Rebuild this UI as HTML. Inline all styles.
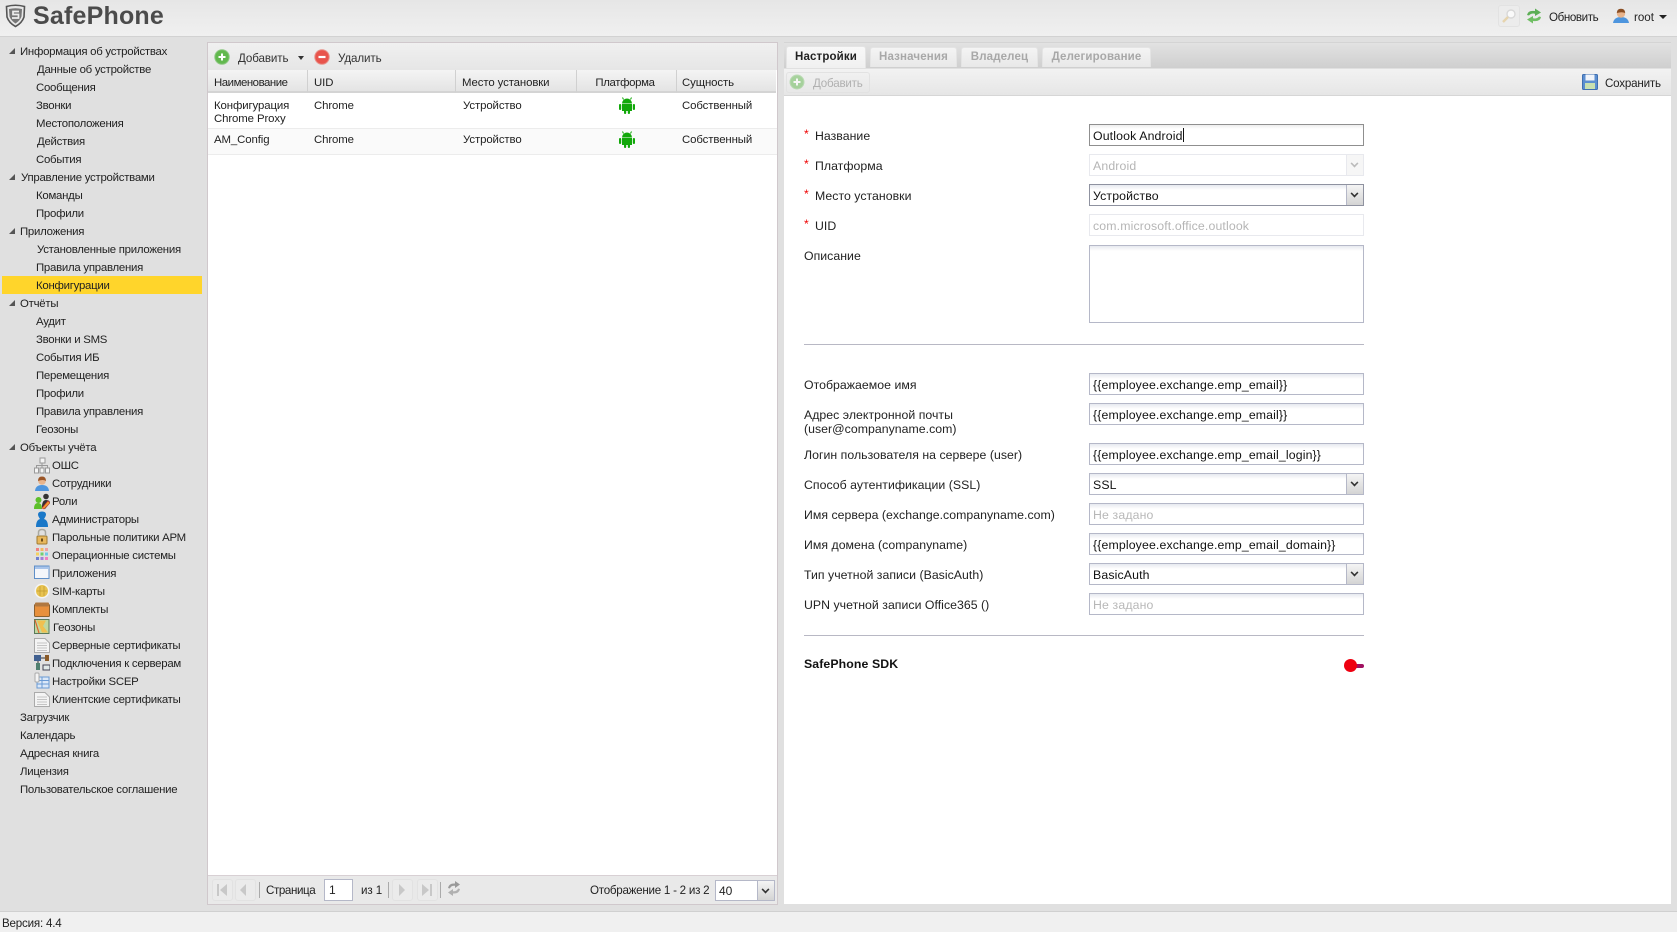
<!DOCTYPE html>
<html lang="ru"><head><meta charset="utf-8"><title>SafePhone</title>
<style>
html,body{margin:0;padding:0;width:1677px;height:932px;overflow:hidden;background:#f0f0f0}
body{position:relative;font-family:"Liberation Sans",sans-serif;font-size:12px;color:#222}
div,span,svg{box-sizing:border-box}
.a{position:absolute}
.t{position:absolute;white-space:nowrap;line-height:18px;height:18px}
#side .r{position:absolute;margin-top:1px;white-space:nowrap;line-height:18px;height:18px;font-size:11.4px;letter-spacing:-.25px;color:#222}
.lb{position:absolute;left:804px;white-space:nowrap;font-size:12.3px;letter-spacing:.03px;line-height:18px;color:#222}
.lb i{color:#e00;font-style:normal;position:absolute;left:0;top:-2px}
.in{position:absolute;left:1089px;width:275px;height:22px;border:1px solid #b5b8c8;background:linear-gradient(#e6e9f0,#fff 5px,#fff);font-size:12.3px;letter-spacing:.14px;line-height:22px;padding-left:3px;white-space:nowrap;color:#111;overflow:hidden}
.in.dis{border-color:#e8e9ee;background:#fff;color:#b5b5b5}
.in.ph{color:#b8b8b8}
.arr{position:absolute;right:0;top:0;width:17px;height:20px;border-left:1px solid #b5b8c8;background:linear-gradient(#f4f4f4,#d4d4d4)}
.arr:after{content:"";position:absolute;left:4px;top:5px;width:5px;height:5px;border-right:2px solid #333;border-bottom:2px solid #333;transform:rotate(45deg) scale(.8)}
.dis .arr{border-color:#e8e9ee;background:#f6f6f6}
.dis .arr:after{border-color:#bbb}
.tab{position:absolute;top:47px;height:20px;background:linear-gradient(#f4f4f4,#e8e8e8);border:1px solid #e4e4e4;border-bottom:0;border-radius:3px 3px 0 0;font-weight:bold;font-size:11.5px;color:#a8a8a8;text-align:center;line-height:19px;letter-spacing:.15px}
.th{position:absolute;top:70px;height:23px;line-height:26px;font-size:11.4px;letter-spacing:-.1px;color:#222;white-space:nowrap;background:linear-gradient(#f4f4f4,#e4e4e4);border-right:1px solid #d0d0d0;border-bottom:2px solid #d4d4d4;padding-left:6px}
.c{position:absolute;white-space:nowrap;font-size:11.4px;letter-spacing:-.1px;line-height:13px;color:#222}
.pb{position:absolute;top:879px;width:21px;height:22px;border:1px solid #e2e2e2;border-radius:3px;background:#ebebeb}
.sep{position:absolute;top:882px;width:1px;height:16px;background:#aaa}
</style></head><body>

<!-- header -->
<div class="a" style="left:0;top:0;width:1677px;height:37px;background:linear-gradient(#e6e6e6,#f0f0f0);border-bottom:1px solid #d2d2d2"></div>
<svg class="a" style="left:5px;top:4px" width="21" height="24" viewBox="0 0 21 24"><path d="M1.500 2.500 Q10.500 0 19.500 2.500 L19 13 Q17 19 10.500 22.500 Q4 19 2 13Z" fill="#e8e8e8" stroke="#555" stroke-width="1.600"/><path d="M4 5 Q10.500 3.500 17 5 L16.500 12.500 Q15 16.500 10.500 19.500 Q6 16.500 4.500 12.500Z" fill="#777"/><path d="M14 7.500H8V10.500H13.500V14H7" fill="none" stroke="#eee" stroke-width="1.700"/></svg>
<div class="t" style="left:33px;top:1px;height:30px;line-height:30px;font-size:25px;font-weight:bold;color:#4b4b4b;letter-spacing:.2px">SafePhone</div>
<div class="a" style="left:1498px;top:5px;width:22px;height:22px;border:1px solid #e2e2e2;border-radius:3px;background:#ececec"></div>
<svg class="a" style="left:1501px;top:8px" width="16" height="16" viewBox="0 0 16 16"><circle cx="10" cy="6" r="4" fill="#fafafa" stroke="#d8d8d8" stroke-width="1.400"/><path d="M7 9L2 14" stroke="#e6d4ae" stroke-width="2.400"/></svg>
<svg class="a" style="left:1525px;top:8px" width="18" height="16" viewBox="0 0 18 16"><path d="M2 7Q3 2 10 3V0.500L16 4.500L10 8V5.700Q6 5 4 7.500Z" fill="#5cae55"/><path d="M16 9Q15 14 8 13V15.500L2 11.500L8 8V10.300Q12 11 14 8.500Z" fill="#6fbe63"/></svg>
<div class="t" style="left:1549px;top:9px;font-size:11.6px;letter-spacing:-.4px;color:#222">Обновить</div>
<svg class="a" style="left:1612px;top:8px" width="18" height="16" viewBox="0 0 18 16"><path d="M1 15Q2 9 9 9Q16 9 17 15Z" fill="#4d95de"/><circle cx="9" cy="5.500" r="4.200" fill="#e8b48c"/><path d="M4.800 5Q5 0.800 9 0.800Q13 0.800 13.200 5Q10 3.500 4.800 5Z" fill="#8a4d22"/></svg>
<div class="t" style="left:1634px;top:9px;font-size:11.6px">root</div>
<div class="a" style="left:1659px;top:15px;border:4px solid transparent;border-top-color:#222;border-bottom:0"></div>

<!-- sidebar -->
<div class="a" style="left:0;top:37px;width:1677px;height:875px;background:#e0e0e0;border-bottom:1px solid #d0d0d0"></div>
<div class="a" style="left:2px;top:276px;width:200px;height:18px;background:#ffd52b"></div>
<div id="side">
<svg class="a" style="left:0;top:1px;overflow:visible" width="16" height="500"><g fill="#555"><path d="M15 47V53H9Z"/><path d="M15 173V179H9Z"/><path d="M15 227V233H9Z"/><path d="M15 299V305H9Z"/><path d="M15 443V449H9Z"/></g></svg>
<div class="r" style="left:20px;top:42px">Информация об устройствах</div>
<div class="r" style="left:37px;top:60px">Данные об устройстве</div>
<div class="r" style="left:36px;top:78px">Сообщения</div>
<div class="r" style="left:36px;top:96px">Звонки</div>
<div class="r" style="left:36px;top:114px">Местоположения</div>
<div class="r" style="left:37px;top:132px">Действия</div>
<div class="r" style="left:36px;top:150px">События</div>
<div class="r" style="left:21px;top:168px">Управление устройствами</div>
<div class="r" style="left:36px;top:186px">Команды</div>
<div class="r" style="left:36px;top:204px">Профили</div>
<div class="r" style="left:20px;top:222px">Приложения</div>
<div class="r" style="left:37px;top:240px">Установленные приложения</div>
<div class="r" style="left:36px;top:258px">Правила управления</div>
<div class="r" style="left:36px;top:276px">Конфигурации</div>
<div class="r" style="left:20px;top:294px">Отчёты</div>
<div class="r" style="left:36px;top:312px">Аудит</div>
<div class="r" style="left:36px;top:330px">Звонки и SMS</div>
<div class="r" style="left:36px;top:348px">События ИБ</div>
<div class="r" style="left:36px;top:366px">Перемещения</div>
<div class="r" style="left:36px;top:384px">Профили</div>
<div class="r" style="left:36px;top:402px">Правила управления</div>
<div class="r" style="left:36px;top:420px">Геозоны</div>
<div class="r" style="left:20px;top:438px">Объекты учёта</div>
<div class="r" style="left:52px;top:456px">ОШС</div>
<div class="r" style="left:52px;top:474px">Сотрудники</div>
<div class="r" style="left:52px;top:492px">Роли</div>
<div class="r" style="left:52px;top:510px">Администраторы</div>
<div class="r" style="left:52px;top:528px">Парольные политики АРМ</div>
<div class="r" style="left:52px;top:546px">Операционные системы</div>
<div class="r" style="left:52px;top:564px">Приложения</div>
<div class="r" style="left:52px;top:582px">SIM-карты</div>
<div class="r" style="left:52px;top:600px">Комплекты</div>
<div class="r" style="left:53px;top:618px">Геозоны</div>
<div class="r" style="left:52px;top:636px">Серверные сертификаты</div>
<div class="r" style="left:52px;top:654px">Подключения к серверам</div>
<div class="r" style="left:52px;top:672px">Настройки SCEP</div>
<div class="r" style="left:52px;top:690px">Клиентские сертификаты</div>
<div class="r" style="left:20px;top:708px">Загрузчик</div>
<div class="r" style="left:20px;top:726px">Календарь</div>
<div class="r" style="left:20px;top:744px">Адресная книга</div>
<div class="r" style="left:20px;top:762px">Лицензия</div>
<div class="r" style="left:20px;top:780px">Пользовательское соглашение</div>
<!-- sidebar icons -->
<svg class="a" style="left:34px;top:457px" width="16" height="256" viewBox="0 0 16 256">
<g fill="#f4f4f4" stroke="#999"><rect x="6" y="1" width="5" height="5"/><rect x="0.500" y="11" width="4" height="5"/><rect x="6" y="11" width="4" height="5"/><rect x="11.500" y="11" width="4" height="5"/><path d="M8 6V11M2.500 11V8.500H13.500V11" fill="none"/></g>
<path d="M1 34Q1.500 28 8 28Q14.500 28 15 34Z" fill="#4d95de"/><circle cx="8" cy="24" r="3.800" fill="#e8b48c"/><path d="M4 24Q4 19.500 8 19.500Q12 19.500 12 24Q9 22 4 24Z" fill="#9a5526"/>
<path d="M0 52Q0 46 4 46Q8 46 8 52Z" fill="#5cbf2a"/><circle cx="4.500" cy="43" r="3" fill="#5cbf2a"/><path d="M8 50Q8 43 12 43Q16 43 16 46L11 52Z" fill="#333"/><circle cx="12" cy="39.500" r="2.800" fill="#333"/><path d="M8 51L14 44L16 46L10 52Z" fill="#f0a030" stroke="#c33" stroke-width=".6"/>
<path d="M2 70Q2 63 6 62Q4 59 4 57.500Q4 54.500 8 54.500Q12 54.500 12 57.500Q12 59 10 62Q14 63 14 70Z" fill="#1a78c8"/>
<rect x="3" y="79" width="10" height="8" rx="1" fill="#e8b85c" stroke="#a07a30"/><path d="M4.500 79V75.500Q4.500 72.500 8 72.500Q11.500 72.500 11.500 75.500V79" fill="none" stroke="#a8a8a0" stroke-width="1.500"/><rect x="7" y="81.500" width="2" height="3" fill="#6b4d1a"/>
<g><rect x="2" y="91" width="3" height="3" fill="#f08080"/><rect x="6.500" y="91" width="3" height="3" fill="#f4b860"/><rect x="11" y="91" width="3" height="3" fill="#f0a0a0"/><rect x="2" y="95.500" width="3" height="3" fill="#f4d060"/><rect x="6.500" y="95.500" width="3" height="3" fill="#70d070"/><rect x="11" y="95.500" width="3" height="3" fill="#70c8e8"/><rect x="2" y="100" width="3" height="3" fill="#7080d0"/><rect x="6.500" y="100" width="3" height="3" fill="#a080d8"/><rect x="11" y="100" width="3" height="3" fill="#f080c0"/></g>
<rect x="0.500" y="109" width="14.500" height="12.500" fill="#f4f6fa" stroke="#5f8fc8"/><rect x="1" y="109.500" width="14" height="2.500" fill="#a8c4ea"/>
<circle cx="8" cy="134" r="7.500" fill="#f4f4f4"/><circle cx="8" cy="134" r="6" fill="#e8c350"/><path d="M6 129V139M10 129V139M3 134H13" stroke="#c09a30" stroke-width=".7"/>
<rect x="0.500" y="147.500" width="15" height="12" rx="1" fill="#e8903c" stroke="#8a6030"/><rect x="1" y="145.500" width="14" height="4" rx="1" fill="#b07840"/>
<rect x="0.500" y="162.500" width="14.500" height="14" fill="#c0d8a0" stroke="#5a7a5a"/><path d="M3 163.500L8 175.500H14L9 169L12 163.500Z" fill="#f0c050"/><path d="M1 163L5 176" stroke="#e06030" stroke-width="1.200"/>
<path d="M0.500 181.500H11L15.500 186V195.500H0.500Z" fill="#f4f4f4" stroke="#aaa"/><path d="M3 186H13M3 188.500H13M3 191H13M3 193.500H13" stroke="#c4c4c4"/>
<rect x="0" y="198" width="7" height="6" fill="#406090"/><rect x="11" y="198" width="4" height="6" fill="#8a5a28"/><rect x="2" y="206" width="4" height="7" fill="#508070"/><rect x="9" y="208" width="7" height="5" fill="#e0e8e8" stroke="#445"/><path d="M7 201H11M4 204V206" stroke="#333"/>
<rect x="3" y="220" width="12" height="11" fill="#dbe8f8" stroke="#6a9ad4"/><path d="M3 223.500H15M3 227H15M8 220V231" stroke="#6a9ad4"/><rect x="1" y="216" width="4" height="9" rx="1" fill="#f4f4f4" stroke="#aaa"/>
<path d="M0.500 235.500H11L15.500 240V249.500H0.500Z" fill="#f4f4f4" stroke="#aaa"/><path d="M3 240H13M3 242.500H13M3 245H13M3 247.500H13" stroke="#c4c4c4"/>
</svg>
</div>

<!-- center panel -->
<div class="a" style="left:207px;top:42px;width:571px;height:863px;background:#fff;border:1px solid #d0c8cc"></div>
<div class="a" style="left:208px;top:43px;width:569px;height:27px;background:linear-gradient(#f0f0f0,#e6e6e6)"></div>
<svg class="a" style="left:214px;top:49px" width="16" height="16" viewBox="0 0 16 16"><circle cx="8" cy="8" r="7.200" fill="#62b84e" stroke="#8cc880"/><path d="M8 4.500V11.500M4.500 8H11.500" stroke="#fff" stroke-width="2"/></svg>
<div class="t" style="left:238px;top:50px;font-size:11.6px;letter-spacing:-.1px;color:#333">Добавить</div>
<div class="a" style="left:298px;top:56px;border:3px solid transparent;border-top:4px solid #333;border-bottom:0"></div>
<svg class="a" style="left:314px;top:49px" width="16" height="16" viewBox="0 0 16 16"><circle cx="8" cy="8" r="7.200" fill="#e8544c" stroke="#e89088"/><path d="M4.500 8H11.500" stroke="#fff" stroke-width="2.200"/></svg>
<div class="t" style="left:338px;top:50px;font-size:11.6px;letter-spacing:-.1px;color:#333">Удалить</div>

<div class="th" style="left:208px;width:100px;letter-spacing:-.45px">Наименование</div>
<div class="th" style="left:308px;width:148px">UID</div>
<div class="th" style="left:456px;width:121px">Место установки</div>
<div class="th" style="left:577px;width:100px;text-align:center;padding:0 5px 0 2px;letter-spacing:-.35px">Платформа</div>
<div class="th" style="left:677px;width:99px;padding-left:5px;border-right:0">Сущность</div>

<div class="a" style="left:208px;top:128px;width:569px;height:1px;background:#ececec"></div>
<div class="a" style="left:208px;top:129px;width:569px;height:26px;background:#fafafa;border-bottom:1px solid #ececec"></div>
<div class="c" style="left:214px;top:100px;line-height:13px">Конфигурация<br>Chrome Proxy</div>
<div class="c" style="left:314px;top:100px">Chrome</div>
<div class="c" style="left:463px;top:100px">Устройство</div>
<div class="c" style="left:682px;top:100px">Собственный</div>
<div class="c" style="left:214px;top:134px">AM_Config</div>
<div class="c" style="left:314px;top:134px">Chrome</div>
<div class="c" style="left:463px;top:134px">Устройство</div>
<div class="c" style="left:682px;top:134px">Собственный</div>
<svg class="a" style="left:619px;top:97px" width="16" height="17" viewBox="0 0 16 17"><g fill="#12a80a"><path d="M3 6.500A5 5 0 0 1 13 6.500Z"/><rect x="3" y="7" width="10" height="7"/><rect x="0" y="7" width="2.200" height="6" rx="1"/><rect x="13.800" y="7" width="2.200" height="6" rx="1"/><rect x="5" y="13" width="2.200" height="4" rx="1"/><rect x="8.800" y="13" width="2.200" height="4" rx="1"/></g><path d="M4.500 2.500L3.500 .5M11.500 2.500L12.500 .5" stroke="#12a80a"/></svg>
<svg class="a" style="left:619px;top:131px" width="16" height="17" viewBox="0 0 16 17"><g fill="#12a80a"><path d="M3 6.500A5 5 0 0 1 13 6.500Z"/><rect x="3" y="7" width="10" height="7"/><rect x="0" y="7" width="2.200" height="6" rx="1"/><rect x="13.800" y="7" width="2.200" height="6" rx="1"/><rect x="5" y="13" width="2.200" height="4" rx="1"/><rect x="8.800" y="13" width="2.200" height="4" rx="1"/></g><path d="M4.500 2.500L3.500 .5M11.500 2.500L12.500 .5" stroke="#12a80a"/></svg>

<!-- paging -->
<div class="a" style="left:208px;top:875px;width:569px;height:29px;background:#e9e9e9;border-top:1px solid #d8d0d4"></div>
<div class="pb" style="left:212px"></div><div class="pb" style="left:235px"></div><div class="pb" style="left:392px"></div><div class="pb" style="left:417px"></div>
<svg class="a" style="left:212px;top:879px" width="226" height="22" viewBox="0 0 226 22" fill="#c8c8c8"><rect x="5" y="5" width="2" height="12"/><path d="M15 5V17L8 11Z"/><path d="M34 5V17L28 11Z"/><path d="M187 5V17L193 11Z"/><path d="M210 5V17L217 11Z"/><rect x="218" y="5" width="2" height="12"/></svg>
<div class="sep" style="left:259px"></div><div class="sep" style="left:388px"></div><div class="sep" style="left:440px"></div>
<div class="t" style="left:266px;top:882px;font-size:11.6px;letter-spacing:-.4px">Страница</div>
<div class="a" style="left:324px;top:879px;width:29px;height:22px;background:#fff;border:1px solid #b5b8c8;font-size:12px;line-height:21px;padding-left:4px">1</div>
<div class="t" style="left:361px;top:882px;font-size:11.6px;letter-spacing:-.1px">из 1</div>
<svg class="a" style="left:446px;top:880px" width="16" height="17" viewBox="0 0 16 17"><path d="M2 8Q3 3 9 3.500V1L14 4.500L9 8V5.800Q5 5.500 4 8.500Z" fill="#999"/><path d="M14 9Q13 14 7 13.500V16L2 12.500L7 9V11.200Q11 11.500 12 8.500Z" fill="#b0b0b0"/></svg>
<div class="t" style="left:590px;top:882px;font-size:11.6px;letter-spacing:-.25px">Отображение 1 - 2 из 2</div>
<div class="a" style="left:715px;top:880px;width:60px;height:21px;background:#fff;border:1px solid #b5b8c8;font-size:12px;line-height:20px;padding-left:3px">40<div class="arr" style="height:19px"></div></div>

<!-- right panel -->
<div class="a" style="left:784px;top:42px;width:887px;height:862px;background:#fff"></div>
<div class="a" style="left:784px;top:42px;width:887px;height:26px;background:linear-gradient(#e2e2e2,#cfcfcf);border-top:1px solid #d4d4d4"></div>
<div class="tab" style="left:786px;width:80px;top:46px;height:22px;background:linear-gradient(#f8f8f8,#f0f0f0);color:#222;line-height:20px">Настройки</div>
<div class="tab" style="left:870px;width:87px">Назначения</div>
<div class="tab" style="left:961px;width:77px">Владелец</div>
<div class="tab" style="left:1042px;width:109px">Делегирование</div>
<div class="a" style="left:784px;top:68px;width:887px;height:28px;background:linear-gradient(#f2f2f2,#e6e6e6);border-top:1px solid #e0e0e0;border-bottom:1px solid #d6d6d6"></div>
<div class="a" style="left:786px;top:72px;width:84px;height:21px;border:1px solid #e2e2e2;border-radius:3px"></div>
<svg class="a" style="left:789px;top:74px" width="16" height="16" viewBox="0 0 16 16" opacity=".5"><circle cx="8" cy="8" r="7" fill="#62b84e" stroke="#8cc880"/><path d="M8 4.500V11.500M4.500 8H11.500" stroke="#fff" stroke-width="2"/></svg>
<div class="t" style="left:813px;top:75px;font-size:11.6px;letter-spacing:-.2px;color:#b0b0b0">Добавить</div>
<svg class="a" style="left:1582px;top:74px" width="16" height="16" viewBox="0 0 16 16"><rect x=".5" y=".5" width="15" height="15" rx="1" fill="#5b8ed0" stroke="#3f6fb0"/><rect x="3.500" y=".5" width="9" height="6" fill="#f0f4fa"/><rect x="3" y="9" width="10" height="6" fill="#c8e0b0"/></svg>
<div class="t" style="left:1605px;top:75px;font-size:11.6px;letter-spacing:-.2px;color:#222">Сохранить</div>

<!-- form -->
<div class="lb" style="top:127px;left:804px;padding-left:11px"><i>*</i>Название</div>
<div class="lb" style="top:157px;padding-left:11px"><i>*</i>Платформа</div>
<div class="lb" style="top:187px;padding-left:11px"><i>*</i>Место установки</div>
<div class="lb" style="top:217px;padding-left:11px"><i>*</i>UID</div>
<div class="lb" style="top:247px">Описание</div>
<div class="in" style="top:124px;border-color:#8f8f8f;background:linear-gradient(#eee,#fff 4px)">Outlook Android<span style="display:inline-block;width:1px;height:14px;background:#111;vertical-align:-2px"></span></div>
<div class="in dis" style="top:154px">Android<div class="arr"></div></div>
<div class="in" style="top:184px;border-color:#8f92a0">Устройство<div class="arr"></div></div>
<div class="in dis" style="top:214px">com.microsoft.office.outlook</div>
<div class="in" style="top:245px;height:78px"></div>
<div class="a" style="left:804px;top:344px;width:560px;height:1px;background:#b8b8c4"></div>

<div class="lb" style="top:376px">Отображаемое имя</div>
<div class="lb" style="top:408px;line-height:14px">Адрес электронной почты<br>(user@companyname.com)</div>
<div class="lb" style="top:446px">Логин пользователя на сервере (user)</div>
<div class="lb" style="top:476px">Способ аутентификации (SSL)</div>
<div class="lb" style="top:506px">Имя сервера (exchange.companyname.com)</div>
<div class="lb" style="top:536px">Имя домена (companyname)</div>
<div class="lb" style="top:566px">Тип учетной записи (BasicAuth)</div>
<div class="lb" style="top:596px">UPN учетной записи Office365 ()</div>
<div class="in" style="top:373px">{{employee.exchange.emp_email}}</div>
<div class="in" style="top:403px">{{employee.exchange.emp_email}}</div>
<div class="in" style="top:443px">{{employee.exchange.emp_email_login}}</div>
<div class="in" style="top:473px">SSL<div class="arr"></div></div>
<div class="in ph" style="top:503px">Не задано</div>
<div class="in" style="top:533px">{{employee.exchange.emp_email_domain}}</div>
<div class="in" style="top:563px">BasicAuth<div class="arr"></div></div>
<div class="in ph" style="top:593px">Не задано</div>
<div class="a" style="left:804px;top:635px;width:560px;height:1px;background:#b8b8c4"></div>
<div class="lb" style="top:655px;font-weight:bold;letter-spacing:.1px;color:#111">SafePhone SDK</div>
<div class="a" style="left:1350px;top:664px;width:14px;height:4px;background:#a01060;border-radius:2px"></div>
<div class="a" style="left:1344px;top:659px;width:13px;height:13px;background:#ee0010;border-radius:50%"></div>

<!-- footer -->
<div class="t" style="left:2px;top:915px;font-size:11.6px;letter-spacing:-.2px;color:#222">Версия: 4.4</div>
</body></html>
